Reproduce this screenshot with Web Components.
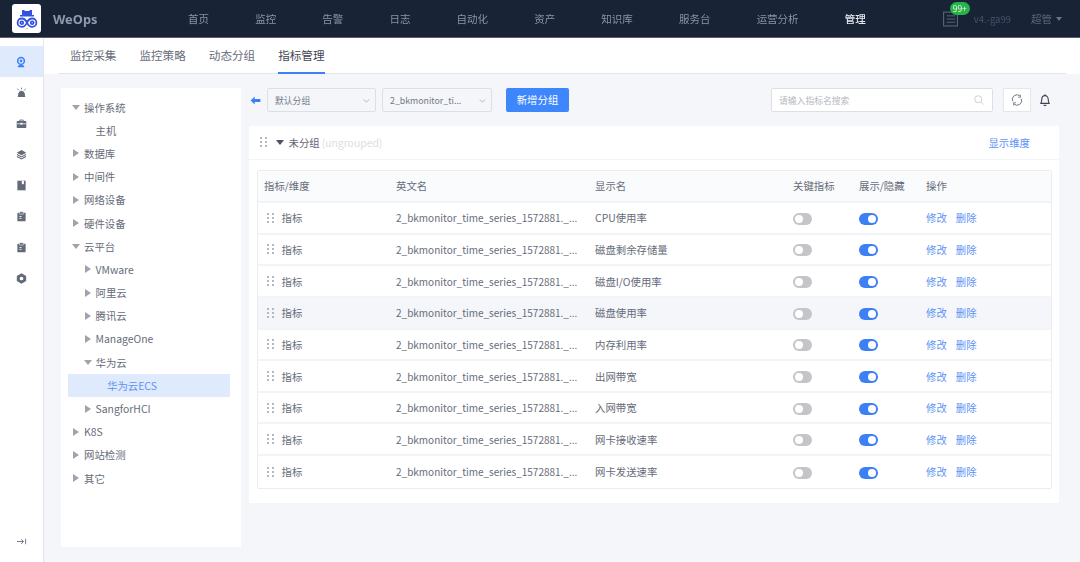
<!DOCTYPE html>
<html lang="zh"><head><meta charset="utf-8"><title>WeOps</title>
<style>
html,body{margin:0;padding:0;height:562px;overflow:hidden;background:#f4f6fa}
body{font-family:"Noto Sans CJK SC","Noto Sans",sans-serif;font-size:10.4px;color:#666c79}
</style></head><body>
<wo-app>
  <wo-topbar slot="top"></wo-topbar>
  <wo-sidebar slot="side"></wo-sidebar>
  <wo-tabs slot="tabs"></wo-tabs>
  <wo-tree slot="tree">
    <wo-node label="操作系统" open><wo-node label="主机" level="1" leaf></wo-node></wo-node>
    <wo-node label="数据库"></wo-node>
    <wo-node label="中间件"></wo-node>
    <wo-node label="网络设备"></wo-node>
    <wo-node label="硬件设备"></wo-node>
    <wo-node label="云平台" open>
      <wo-node label="VMware" level="1"></wo-node>
      <wo-node label="阿里云" level="1"></wo-node>
      <wo-node label="腾讯云" level="1"></wo-node>
      <wo-node label="ManageOne" level="1"></wo-node>
      <wo-node label="华为云" level="1" open><wo-node label="华为云ECS" level="2" leaf selected></wo-node></wo-node>
      <wo-node label="SangforHCI" level="1"></wo-node>
    </wo-node>
    <wo-node label="K8S"></wo-node>
    <wo-node label="网站检测"></wo-node>
    <wo-node label="其它"></wo-node>
  </wo-tree>
  <wo-toolbar slot="toolbar"></wo-toolbar>
  <wo-group slot="group">
    <wo-row header></wo-row>
    <wo-row name="CPU使用率"></wo-row>
    <wo-row name="磁盘剩余存储量"></wo-row>
    <wo-row name="磁盘I/O使用率"></wo-row>
    <wo-row name="磁盘使用率" hover></wo-row>
    <wo-row name="内存利用率"></wo-row>
    <wo-row name="出网带宽"></wo-row>
    <wo-row name="入网带宽"></wo-row>
    <wo-row name="网卡接收速率"></wo-row>
    <wo-row name="网卡发送速率"></wo-row>
  </wo-group>
</wo-app>
<script>
const ICONS={
 webcam:'<circle cx="8" cy="6.500" r="5.500" fill="#3d7ff5"/><circle cx="8" cy="6.500" r="3.400" fill="#dfeafd"/><circle cx="8" cy="6.500" r="1.800" fill="#3d7ff5"/><path d="M3.500 15c.5-2.400 2-3.300 4.500-3.300s4 .9 4.500 3.300z" fill="#3d7ff5"/>',
 alarm:'<path d="M2.500 14.500 3.500 9a4.600 4.600 0 0 1 9 0l1 5.500z" fill="#636a78"/><path d="M8 1v2.500M2 2.500l2.200 2.500M14 2.500l-2.200 2.500" stroke="#636a78" stroke-width="1.200" fill="none"/>',
 case:'<path d="M5.500 4.500V3h5v1.500" stroke="#636a78" stroke-width="1.300" fill="none"/><rect x="1" y="4.500" width="14" height="10" rx="1" fill="#636a78"/><rect x="1" y="8" width="14" height="1" fill="#fff"/><rect x="6.500" y="7" width="3" height="2.500" fill="#fff"/>',
 layers:'<path d="M8 1.500 15 5.300 8 9 1 5.300z" fill="#636a78"/><path d="M1.500 8 8 11.500 14.500 8M1.500 10.800 8 14.300 14.500 10.800" stroke="#636a78" stroke-width="1.500" fill="none"/>',
 book:'<path d="M2 1h12v14H2z" fill="#636a78"/><path d="M8.500 1h3v5.500l-1.500-1.200-1.500 1.200z" fill="#fff"/>',
 clip:'<rect x="2" y="2.500" width="12" height="12.500" rx="1" fill="#636a78"/><rect x="5" y="1" width="6" height="3.500" rx=".6" fill="#636a78" stroke="#fff" stroke-width=".8"/><rect x="5" y="7.500" width="3" height="1.200" fill="#fff"/><rect x="5" y="10" width="3" height="1.200" fill="#fff"/>',
 hex:'<path fill-rule="evenodd" d="M8 .5 14.800 4.300v7.400L8 15.500 1.200 11.700V4.300zM8 5.300a2.700 2.700 0 1 0 0 5.400 2.700 2.700 0 0 0 0-5.400z" fill="#636a78"/>',
 collapse:'<path d="M1.500 8h9M7.500 4.500 11 8l-3.500 3.500" stroke="#636a78" stroke-width="1.300" fill="none"/><path d="M14 4v8" stroke="#636a78" stroke-width="1.300"/>',
 search:'<circle cx="7" cy="7" r="4.700" stroke="#c7cbd3" stroke-width="1.200" fill="none"/><path d="m10.500 10.500 3.500 3.500" stroke="#c7cbd3" stroke-width="1.200"/>',
 refresh:'<path d="M3.200 9.500A5.200 5.200 0 0 1 11.500 3.500M12.800 6.500A5.200 5.200 0 0 1 4.500 12.500" stroke="#6b7280" stroke-width="1.100" fill="none"/><path d="m11.800 1.800.3 3-3 .1M4.200 14.200l-.3-3 3-.1" stroke="#6b7280" stroke-width=".9" fill="none"/>',
 bell:'<path d="M3 11.800c1-.9 1.300-1.900 1.300-4.300C4.300 5 5.800 3 8 3s3.700 2 3.700 4.500c0 2.400.3 3.400 1.300 4.300z" stroke="#3d4452" stroke-width="1.300" fill="none" stroke-linejoin="round"/><path d="M6.500 13.500a1.700 1.700 0 0 0 3 0M8 1.300V3" stroke="#3d4452" stroke-width="1.200" fill="none"/>',
 arrow:'<path d="M7 3 2 8l5 5V9.700h7V6.300H7z" fill="#3d7ff5"/>',
 list:'<rect x="1.500" y="2" width="13" height="13" fill="none" stroke="#5d6675" stroke-width="1"/><path d="M4.500 5.500h8M4.500 8.500h8M4.500 11.500h8" stroke="#5d6675" stroke-width=".9"/>',
 chev:'<path d="m4 6.500 4 4 4-4" stroke="#a4a9b3" stroke-width="1.200" fill="none"/>'
};
function def(name,fn,css,html){
 customElements.define(name,class extends HTMLElement{
  connectedCallback(){
   if(this.shadowRoot)return;
   const r=this.attachShadow({mode:'open'});
   r.innerHTML='<style>'+css+'</style>'+(typeof html==='function'?html(this):html);
   if(fn)fn(this,r);
  }
 });
}
def('wo-icon',null,':host{display:inline-flex;flex:none;line-height:0}svg{width:100%;height:100%;display:block}',
 h=>'<svg viewBox="0 0 16 16">'+ICONS[h.getAttribute('name')]+'</svg>');

def('wo-app',null,`
 :host{display:grid;height:562px;grid-template:38px 1fr/44px 1fr;overflow:hidden;filter:blur(.3px)}
 .top{grid-column:1/3}
 .side{grid-row:2}
 .main{display:flex;flex-direction:column;min-width:0}
 .content{display:flex;gap:8px;padding:14px 21px 15px 17px;flex:1;min-height:0}
 .right{flex:1;display:flex;flex-direction:column;gap:14px;min-width:0}
`,`<div class="top"><slot name="top"></slot></div>
 <div class="side" style="display:flex"><slot name="side"></slot></div>
 <div class="main"><slot name="tabs"></slot>
  <div class="content"><slot name="tree"></slot><div class="right"><slot name="toolbar"></slot><slot name="group"></slot></div></div>
 </div>`);

def('wo-topbar',null,`
 :host{display:flex;align-items:center;height:38px;box-sizing:border-box;background:#182336;border-bottom:1px solid #5b5f69;color:#8a94a6;font-size:10.500px}
 .logo{width:29px;height:29px;margin-left:12px;background:#fff;border-radius:3px;display:flex;align-items:center;justify-content:center;flex:none}
 .brand{margin-left:12px;font:bold 12.800px "Noto Sans","Noto Sans CJK SC",sans-serif;width:105px;color:#8d9ab0}
 nav{display:flex;gap:46.150px;margin-left:30px}
 nav b{font-weight:400}
 nav b.on{color:#e6e9ef;font-weight:500}
 .msg{position:relative;margin-left:76px;width:17px;height:17px;display:block}
 .msg wo-icon{width:17px;height:17px}
 .badge{position:absolute;left:8px;top:-8px;width:20px;height:13px;border-radius:7px;background:#27b34a;color:#e9f9ec;font-size:8.500px;line-height:13px;text-align:center;white-space:nowrap}
 .ver{margin-left:15px;font-size:9.500px;color:#46516a}
 .user{margin-left:20px;color:#5b6678}
 .car{margin-left:4px;border:3.500px solid transparent;border-top:4px solid #697485;border-bottom:0}
`,`<div class="logo"><svg width="22" height="22" viewBox="0 0 22 22">
   <path d="M6 2h2l1 1h4l1-1h2v5h2v1.500H4V7h2z" fill="#3451e0"/>
   <g fill="none" stroke="#3451e0" stroke-width="1.800"><path d="M11 14.500C9.500 11.500 7.500 10.500 5.800 10.500a4.200 4.200 0 0 0 0 8.400c1.700 0 3.700-1 5.200-4.400 1.500 3.400 3.500 4.400 5.200 4.400a4.200 4.200 0 0 0 0-8.400c-1.700 0-3.700 1-5.200 4z"/><circle cx="5.800" cy="14.700" r="1.400"/><circle cx="16.200" cy="14.700" r="1.400"/></g>
   <circle cx="11" cy="20.500" r=".8" fill="#f0a020"/></svg></div>
 <div class="brand">WeOps</div>
 <nav><b>首页</b><b>监控</b><b>告警</b><b>日志</b><b>自动化</b><b>资产</b><b>知识库</b><b>服务台</b><b>运营分析</b><b class="on">管理</b></nav>
 <div class="msg"><wo-icon name="list"></wo-icon><span class="badge">99+</span></div>
 <span class="ver">v4.-ga99</span><span class="user">超管</span><span class="car"></span>`);

def('wo-sidebar',null,`
 :host{display:flex;flex-direction:column;width:44px;box-sizing:border-box;background:#fff;border-right:1px solid #e3e6ec;padding-top:8px;height:524px}
 .i{height:31px;display:flex;align-items:center;justify-content:center;flex:none;padding-right:1px}
 .i wo-icon{width:11px;height:11px}
 .i.on{background:#dfeafd}
 .i.on wo-icon{width:12px;height:12px}
 .sp{flex:1}
`,h=>['webcam','alarm','case','layers','book','clip','clip','hex'].map((n,i)=>`<div class="i ${i?'':'on'}"><wo-icon name="${n}"></wo-icon></div>`).join('')+
 '<div class="sp"></div><div class="i" style="margin-bottom:5px"><wo-icon name="collapse"></wo-icon></div>');

def('wo-tabs',null,`
 :host{display:block;background:#fff;height:36px;box-sizing:border-box;padding-left:14px;padding-right:14px}
 .w{display:flex;gap:23px;height:36px;box-sizing:border-box;border-bottom:1px solid #e3e6ec;padding-left:12px;font-size:11.600px;color:#666c79}
 span{line-height:35px;height:36px;box-sizing:border-box}
 .on{color:#3f4653;border-bottom:2px solid #3d7ff5}
`,'<div class="w"><span>监控采集</span><span>监控策略</span><span>动态分组</span><span class="on">指标管理</span></div>');

def('wo-tree',null,`
 :host{display:block;width:180px;flex:none;box-sizing:border-box;background:#fff;padding:7.500px 11px 0 7px}
`,'<slot></slot>');

def('wo-node',null,`
 :host{display:block}
 .r{height:23.200px;display:flex;align-items:center;padding-left:calc(4px + var(--l)*11.500px);white-space:nowrap;color:#666c79;font-size:10.400px}
 :host([selected]) .r{background:#dfeafd;color:#5d93f5}
 .c{width:0;height:0;flex:none;margin-right:5px;border-style:solid}
 .closed{border-width:4px 0 4px 6px;border-color:transparent transparent transparent #9ea3ad;margin-left:1px;margin-right:5px}
 .open{border-width:5px 4px 0 4px;border-color:#9ea3ad transparent transparent transparent;margin-right:4px}
 .leaf{width:8px;border:0;margin-right:4px}
`,h=>{const l=h.getAttribute('level')||0;const k=h.hasAttribute('leaf')?'leaf':h.hasAttribute('open')?'open':'closed';
 return `<div class="r" style="--l:${l}"><span class="c ${k}"></span><span>${h.getAttribute('label')}</span></div><slot></slot>`;});

def('wo-select',null,`
 :host{display:flex;align-items:center;justify-content:space-between;box-sizing:border-box;height:24px;border:1px solid #dcdfe5;border-radius:2px;background:#f4f6fa;padding:0 3px 0 7px;font-size:8.800px;color:#737987}
 wo-icon{width:11px;height:11px}
`,h=>`<span><slot></slot></span><wo-icon name="chev"></wo-icon>`);

def('wo-toolbar',null,`
 :host{display:flex;align-items:center;height:24px;flex:none}
 .back{width:13px;height:13px;margin-right:5px}
 .s1{width:109px}.s2{width:110px;margin-left:6px}
 .btn{margin-left:14px;width:63px;height:24px;line-height:23px;text-align:center;background:#3d86fb;color:#fff;border-radius:2px;font-size:10.400px}
 .sp{flex:1}
 .search{width:222px;height:24px;box-sizing:border-box;background:#fff;border:1px solid #dcdfe5;border-radius:2px;display:flex;align-items:center;justify-content:space-between;padding:0 7px;font-size:8.800px;color:#b4b8c1}
 .search wo-icon{width:12px;height:12px}
 .ref{margin-left:10px;width:28px;height:24px;box-sizing:border-box;background:#fff;border:1px solid #e3e6ec;display:flex;align-items:center;justify-content:center}
 .ref wo-icon{width:14px;height:14px}
 .bell{margin:0 7px 0 7px;width:14px;height:14px}
`,`<wo-icon class="back" name="arrow"></wo-icon>
 <wo-select class="s1">默认分组</wo-select><wo-select class="s2">2_bkmonitor_ti...</wo-select>
 <div class="btn">新增分组</div><div class="sp"></div>
 <div class="search"><span>请输入指标名搜索</span><wo-icon name="search"></wo-icon></div>
 <div class="ref"><wo-icon name="refresh"></wo-icon></div><wo-icon class="bell" name="bell"></wo-icon>`);

def('wo-grip',null,`
 :host{display:inline-grid;grid-template-columns:2px 2px;gap:2px 2.500px;flex:none}
 i{width:2px;height:2px;background:#b4b8c1;display:block}
`,'<i></i><i></i><i></i><i></i><i></i><i></i>');

def('wo-group',null,`
 :host{display:block;background:#fff;height:377px;flex:none;box-sizing:border-box}
 .hd{height:34px;box-sizing:border-box;border-bottom:1px solid #f3f4f7;display:flex;align-items:center;padding:0 29px 1px 11px}
 .car{margin:0 5px 0 9px;border:4px solid transparent;border-top:5px solid #4a5160;border-bottom:0;}
 .t{color:#5f6572}
 .en{color:#dcdee3;margin-left:2px}
 .sp{flex:1}
 a{color:#5d93f5}
 .tb{margin:10px 7px 0 8px;border:1px solid #eaecf0;border-radius:2px}
`,`<div class="hd"><wo-grip></wo-grip><span class="car"></span><span class="t">未分组</span><span class="en">(ungrouped)</span><span class="sp"></span><a>显示维度</a></div>
 <div class="tb"><slot></slot></div>`);

def('wo-switch',null,`
 :host{display:block;width:19px;height:12px;border-radius:6px;background:#c4c5c9;position:relative;margin-top:2px}
 :host([on]){background:#3d7ff5}
 i{position:absolute;top:2px;left:2px;width:8px;height:8px;border-radius:50%;background:#fff}
 :host([on]) i{left:9px}
`,'<i></i>');

def('wo-row',null,`
 :host{display:grid;grid-template-columns:132px 199px 198px 66px 67px 1fr;height:31.650px;box-sizing:border-box;align-items:center;padding-left:6px;background:#fff;border-bottom:2px solid #f3f4f7}
 :host(:last-child){border-bottom:0}
 :host([header]){background:#fafbfd;height:32px;padding-bottom:1px}
 :host([hover]){background:#f4f6fa}
 .a{display:flex;align-items:center;gap:8px;padding-left:3px}
 .e{font-size:10px}
 a{color:#5d93f5;margin-right:9px}
 span{white-space:nowrap}
`,h=>h.hasAttribute('header')?
 '<span>指标/维度</span><span>英文名</span><span>显示名</span><span>关键指标</span><span>展示/隐藏</span><span>操作</span>':
 `<span class="a"><wo-grip></wo-grip>指标</span><span class="e">2_bkmonitor_time_series_1572881._...</span><span>${h.getAttribute('name')}</span>
  <span><wo-switch></wo-switch></span><span><wo-switch on></wo-switch></span><span><a>修改</a><a>删除</a></span>`);
</script>
</body></html>
